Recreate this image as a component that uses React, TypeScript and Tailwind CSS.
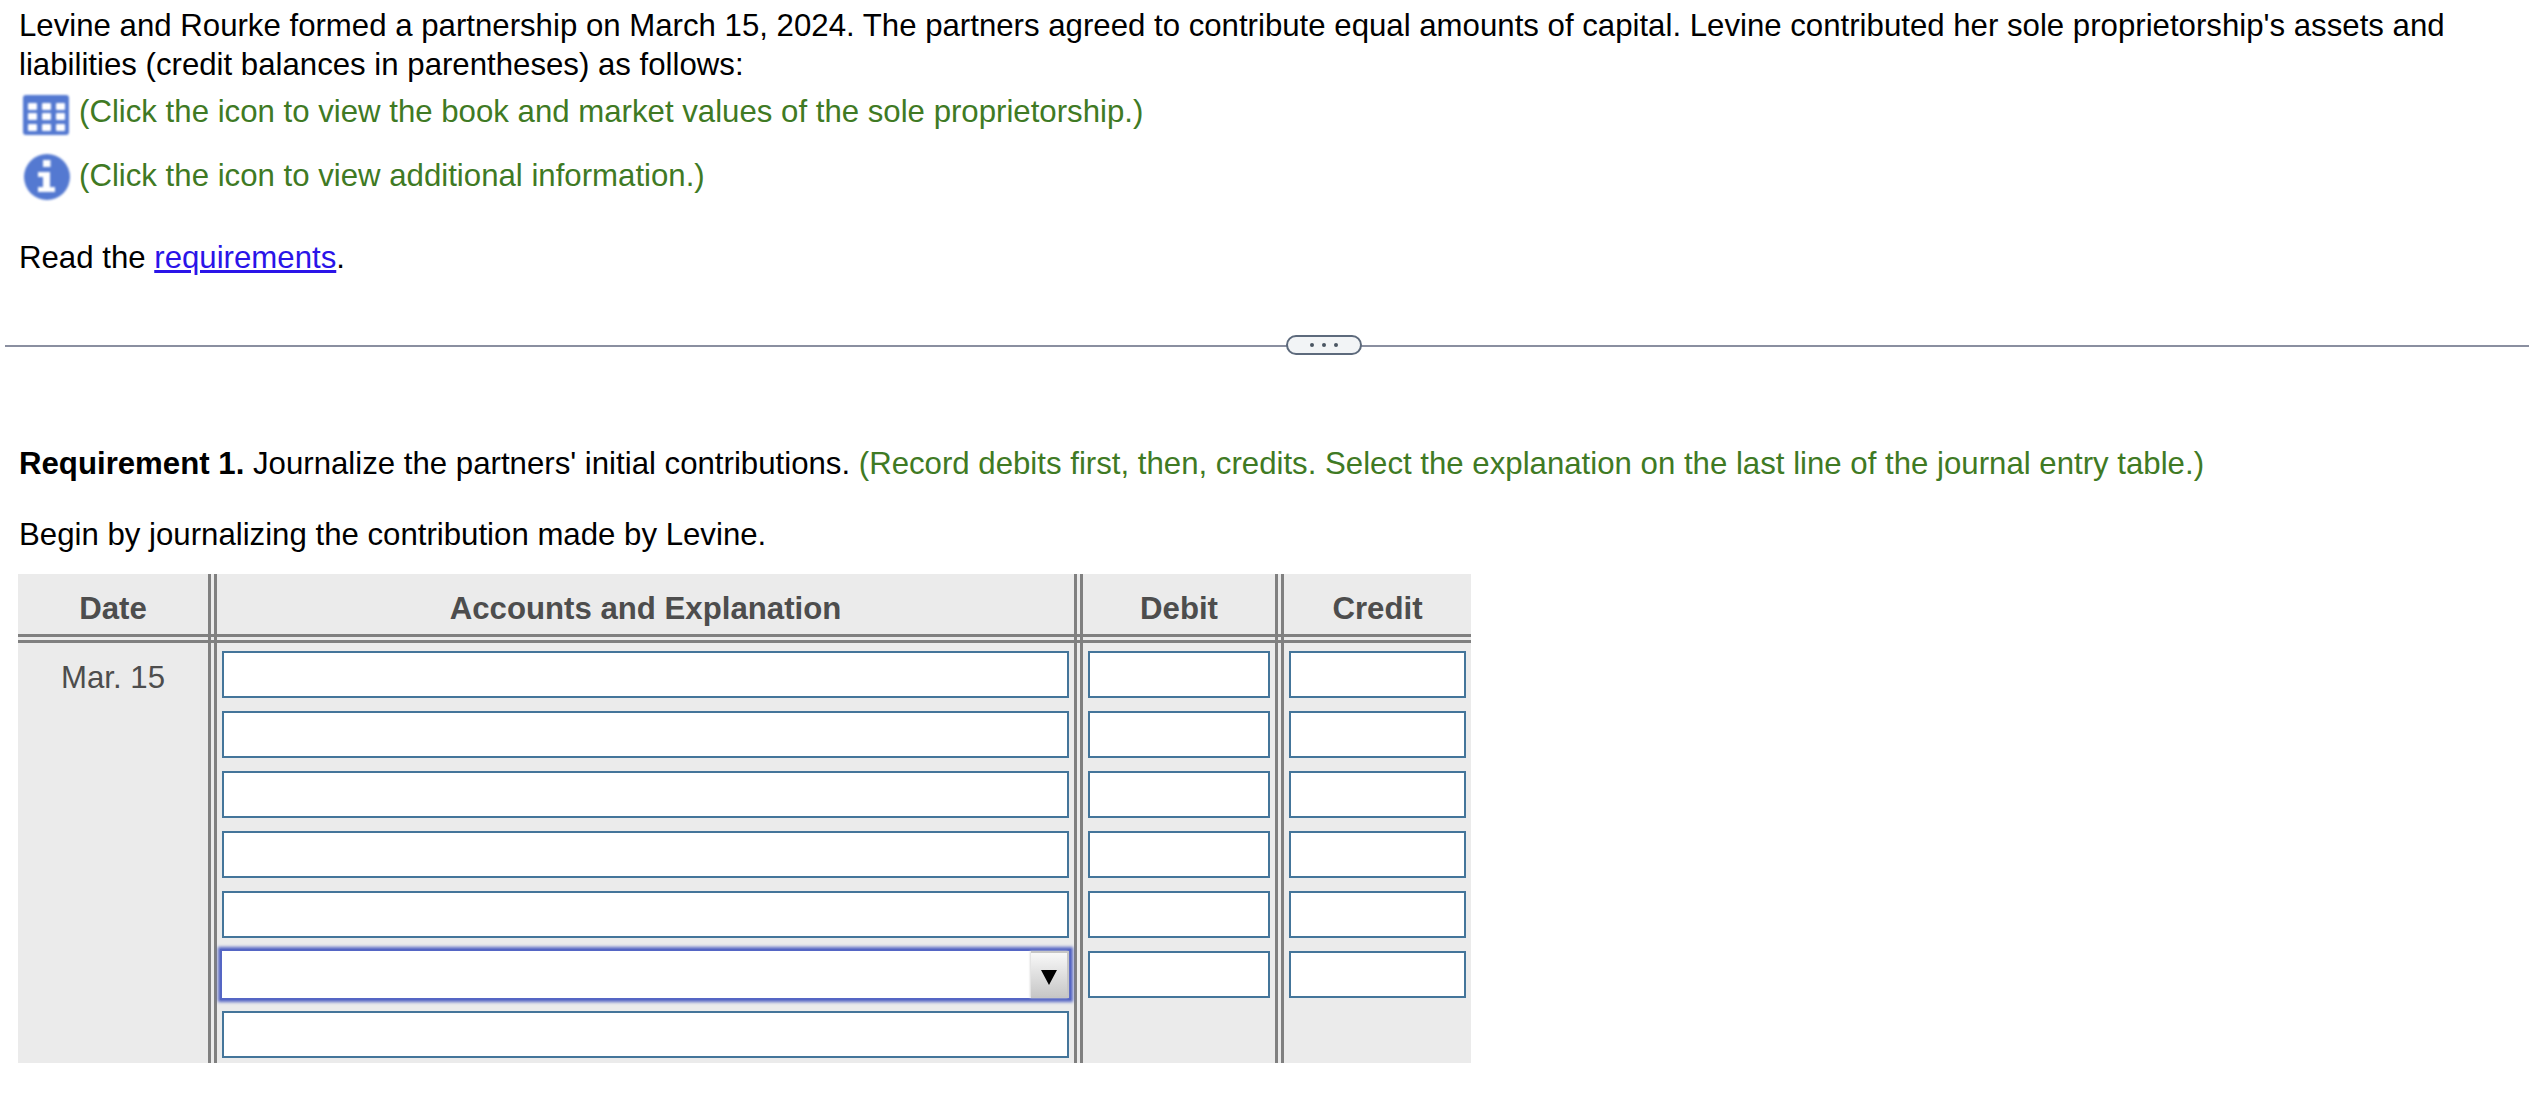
const ROWS = [0, 1, 2, 3, 4, 5];

function Cell() {
  return <div className="h-[47px] border-2 border-[#44759a] bg-white" />;
}

// the header rule and the column rules cross each other like a #
function HeaderRule({ last = false }: { last?: boolean }) {
  return (
    <div className="flex h-[9px] justify-end border-y-[3px] border-[#808080]">
      {!last && <div className="h-full w-[9px] border-x-[3px] border-[#808080]" />}
    </div>
  );
}

function GridIcon() {
  return (
    <svg width="46" height="40" viewBox="0 0 46 40" className="mt-[3px] shrink-0 blur-[0.8px]">
      <rect width="46" height="40" rx="3" fill="#5479d1" />
      {[8, 18, 29].map((y) =>
        [5, 19, 33].map((x) => <rect key={`${x}-${y}`} x={x} y={y} width="9" height="7" rx="1" fill="#fff" />),
      )}
    </svg>
  );
}

function InfoIcon() {
  return (
    <svg width="48" height="46" viewBox="0 0 48 46" className="shrink-0 blur-[0.8px]">
      <circle cx="24" cy="23" r="23" fill="#5479d1" />
      <rect x="20" y="6" width="7.5" height="7" fill="#fff" />
      <path d="M15 18h12v15h5v5H15v-5h5V23h-5z" fill="#fff" />
    </svg>
  );
}

export default function App() {
  return (
    <div className="h-[1095px] w-[2529px] overflow-hidden bg-white font-['Liberation_Sans',Arial,sans-serif] text-[31.2px] leading-[39px] text-black">
      <div className="pl-[19px] pr-[18px] pt-[6px]">
        <p>
          Levine and Rourke formed a partnership on March 15, 2024. The partners agreed to contribute equal amounts of capital. Levine contributed her sole proprietorship's assets and liabilities (credit balances in parentheses) as follows:
        </p>
        <div className="mt-[8px] flex items-start gap-[10px] pl-[4px] text-[#3f7a24]">
          <GridIcon />
          <span>(Click the icon to view the book and market values of the sole proprietorship.)</span>
        </div>
        <div className="mt-[19px] flex items-start gap-[8px] pl-[4px] text-[#3f7a24]">
          <InfoIcon />
          <span className="mt-[2px]">(Click the icon to view additional information.)</span>
        </div>
        <p className="mt-[38px]">
          Read the <a className="text-[#2a14e8] underline">requirements</a>.
        </p>
      </div>

      <div className="relative ml-[5px] mt-[68px] h-[2px] bg-[#8a8fa0]">
        <div className="absolute left-[1281px] top-[-10px] flex h-[20px] w-[76px] items-center justify-center gap-[8px] rounded-full border-2 border-[#5d6a7c] bg-[#f2f4f6]">
          <span className="h-[4px] w-[4px] rounded-full bg-[#4b5563]" />
          <span className="h-[4px] w-[4px] rounded-full bg-[#4b5563]" />
          <span className="h-[4px] w-[4px] rounded-full bg-[#4b5563]" />
        </div>
      </div>

      <div className="px-[18px]">
        <p className="mt-[97px] pl-[1px]">
          <b>Requirement 1.</b> Journalize the partners' initial contributions.{' '}
          <span className="text-[#3f7a24]">(Record debits first, then, credits. Select the explanation on the last line of the journal entry table.)</span>
        </p>
        <p className="mt-[32px] pl-[1px]">Begin by journalizing the contribution made by Levine.</p>

        <div className="mt-[20px] grid h-[489px] w-[1453px] grid-cols-[199px_866px_201px_187px] grid-rows-[60px_9px_1fr] bg-[#ebebeb] text-[#4d4d4d]">
          <div className="flex items-center justify-center border-r-[9px] border-double border-[#808080] pt-[9px] font-bold">Date</div>
          <div className="flex items-center justify-center border-r-[9px] border-double border-[#808080] pt-[9px] font-bold">Accounts and Explanation</div>
          <div className="flex items-center justify-center border-r-[9px] border-double border-[#808080] pt-[9px] font-bold">Debit</div>
          <div className="flex items-center justify-center pt-[9px] font-bold">Credit</div>

          <HeaderRule />
          <HeaderRule />
          <HeaderRule />
          <HeaderRule last />

          <div className="border-r-[9px] border-double border-[#808080] pt-[15px] text-center">Mar. 15</div>
          <div className="flex flex-col gap-[13px] border-r-[9px] border-double border-[#808080] px-[5px] pt-[8px]">
            {ROWS.slice(0, 5).map((r) => (
              <Cell key={r} />
            ))}
            <div className="-mx-[2px] -my-[2px] flex h-[51px] border-2 border-[#5566c4] bg-white shadow-[0_0_3px_2px_#5566c4]">
              <div className="flex-1" />
              <div className="flex w-[38px] items-center justify-center border-t-2 border-r-2 border-b-2 border-[#c6c6c6] bg-gradient-to-b from-[#f8f8f8] to-[#c8c8c8] pt-[5px] shadow-[-1px_0_2px_#d8d8d8]">
                <svg width="16" height="15" viewBox="0 0 16 15">
                  <polygon points="0,0 16,0 8,15" fill="#000" />
                </svg>
              </div>
            </div>
            <Cell />
          </div>
          <div className="flex flex-col gap-[13px] border-r-[9px] border-double border-[#808080] px-[5px] pt-[8px]">
            {ROWS.map((r) => (
              <Cell key={r} />
            ))}
          </div>
          <div className="flex flex-col gap-[13px] px-[5px] pt-[8px]">
            {ROWS.map((r) => (
              <Cell key={r} />
            ))}
          </div>
        </div>
      </div>
    </div>
  );
}
